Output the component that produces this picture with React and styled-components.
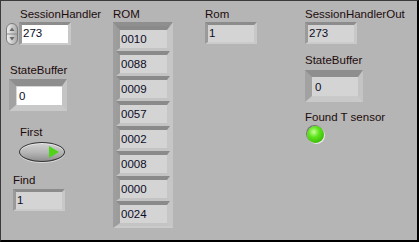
import React from "react";
import styled, { createGlobalStyle } from "styled-components";

const GlobalStyle = createGlobalStyle`
  html, body { margin: 0; padding: 0; background: #ffffff; }
  body { font-family: "Liberation Sans", Arial, sans-serif; }
`;

const Panel = styled.div`
  width: 419px;
  height: 242px;
  box-sizing: border-box;
  background: #b5b5b5;
  border-top: 1px solid #3a3a3a;
  border-left: 1px solid #3a3a3a;
  border-right: 2px solid #000;
  border-bottom: 2px solid #000;
  display: flex;
  align-items: flex-start;
`;

const Column = styled.div`
  display: flex;
  flex-direction: column;
  align-items: flex-start;
  flex: none;
  width: ${(p) => p.$width}px;
  padding-left: ${(p) => p.$pad || 0}px;
  box-sizing: border-box;
`;

const Label = styled.div`
  font-size: 11.5px;
  line-height: 14px;
  color: #1e0c0c;
  white-space: nowrap;
  margin-top: ${(p) => p.$top || 0}px;
  margin-left: ${(p) => p.$indent || 0}px;
`;

const Row = styled.div`
  display: flex;
  align-items: center;
  margin-top: ${(p) => p.$top || 0}px;
`;

const Field = styled.div`
  box-sizing: border-box;
  width: ${(p) => p.$w || 52}px;
  height: ${(p) => p.$h || 22}px;
  margin-top: ${(p) => p.$top || 0}px;
  margin-left: ${(p) => p.$indent || 0}px;
  border-style: solid;
  border-width: 3px 3px 2px 3px;
  border-color: #8c8c8c #c8c8c8 #cbcbcb #9a9a9a;
  background: ${(p) => (p.$control ? "#ffffff" : "#d4d4d4")};
  font-size: 11.5px;
  line-height: 16px;
  color: #0c0c26;
  padding-left: 1px;
`;

const Frame = styled.div`
  box-sizing: border-box;
  width: 58px;
  height: 32px;
  margin-top: ${(p) => p.$top || 0}px;
  margin-left: ${(p) => p.$indent || 0}px;
  border-style: solid;
  border-width: 7px 5px 6px 7px;
  border-color: #8e8e8e #c4c4c4 #c9c9c9 #a2a2a2;
  background: #d6d6d6;
  padding: 1px 0 0 1px;
`;

const FrameInner = styled.div`
  height: 100%;
  background: ${(p) => (p.$control ? "#ffffff" : "#d4d4d4")};
  font-size: 11.5px;
  line-height: 18px;
  color: #0c0c26;
  padding-left: 2px;
`;

const ArrayBox = styled.div`
  box-sizing: border-box;
  width: 60px;
  margin-top: 1px;
  border-style: solid;
  border-width: 4px 3px 2px 3px;
  border-color: #8f8f8f #c6c6c6 #cbcbcb #9e9e9e;
  background: #b8b8b8;
  display: flex;
  flex-direction: column;
`;

const Cell = styled.div`
  box-sizing: border-box;
  height: 25px;
  width: 54px;
  border-style: solid;
  border-width: 4px 3px 3px 4px;
  border-color: #8a8a8a #c6c6c6 #c4c4c4 #9c9c9c;
  background: #d4d4d4;
  font-size: 11.5px;
  line-height: 18px;
  color: #0c0c26;
  padding-left: 1px;
`;

const Button = styled.div`
  box-sizing: border-box;
  width: 46px;
  height: 20px;
  margin-top: ${(p) => p.$top || 0}px;
  margin-left: ${(p) => p.$indent || 0}px;
  border: 1px solid #353535;
  border-radius: 50%;
  background: linear-gradient(#d2d2d2, #b4b4b4 55%, #8e8e8e);
  box-shadow: inset 0 1px 0 #e8e8e8, 0 1px 0 #dcdcdc;
  display: flex;
  align-items: center;
  justify-content: flex-end;
  padding-right: 5px;
`;

const Led = styled.div`
  width: 17px;
  height: 17px;
  margin-top: ${(p) => p.$top || 0}px;
  margin-left: ${(p) => p.$indent || 0}px;
  border-radius: 50%;
  background: radial-gradient(circle at 40% 35%, #c9ff9c 0%, #5fe51c 35%, #2fae00 90%);
  box-shadow: -1px -1px 0 #7a7a7a, 1px 1px 0 #ececec;
`;

function Spinner() {
  return (
    <svg width="12" height="22" viewBox="0 0 12 22">
      <defs>
        <linearGradient id="sp" x1="0" x2="1">
          <stop offset="0" stopColor="#f2f2f2" />
          <stop offset="1" stopColor="#a8a8a8" />
        </linearGradient>
      </defs>
      <rect x="0.5" y="0.5" width="11" height="21" rx="5.5" fill="url(#sp)" stroke="#7c7c7c" />
      <line x1="1" y1="11" x2="11" y2="11" stroke="#8a8a8a" />
      <path d="M3.5 8 L6 4.5 L8.5 8 Z" fill="#6a6a6a" />
      <path d="M3.5 14 L6 17.5 L8.5 14 Z" fill="#6a6a6a" />
    </svg>
  );
}

function PlayArrow() {
  return (
    <svg width="10" height="12" viewBox="0 0 10 12">
      <path d="M0 0 L10 6 L0 12 Z" fill="#4fd41a" />
    </svg>
  );
}

const romValues = ["0010", "0088", "0009", "0057", "0002", "0008", "0000", "0024"];

export default function App() {
  return (
    <>
      <GlobalStyle />
      <Panel>
        <Column $width={112} $pad={5}>
          <Label $top={6} $indent={14}>SessionHandler</Label>
          <Row $top={1}>
            <Spinner />
            <Field $control $w={52} $h={23} $indent={1}>273</Field>
          </Row>
          <Label $top={18} $indent={4}>StateBuffer</Label>
          <Frame $control $top={2} $indent={3}>
            <FrameInner $control>0</FrameInner>
          </Frame>
          <Label $top={14} $indent={14}>First</Label>
          <Button $top={3} $indent={13}>
            <PlayArrow />
          </Button>
          <Label $top={11} $indent={7}>Find</Label>
          <Field $top={2} $indent={7}>1</Field>
        </Column>
        <Column $width={92}>
          <Label $top={6}>ROM</Label>
          <ArrayBox>
            {romValues.map((v) => (
              <Cell key={v}>{v}</Cell>
            ))}
          </ArrayBox>
        </Column>
        <Column $width={100}>
          <Label $top={6}>Rom</Label>
          <Field $top={1}>1</Field>
        </Column>
        <Column $width={110}>
          <Label $top={6}>SessionHandlerOut</Label>
          <Field $top={1}>273</Field>
          <Label $top={9}>StateBuffer</Label>
          <Frame $top={3}>
            <FrameInner>0</FrameInner>
          </Frame>
          <Label $top={8}>Found T sensor</Label>
          <Led $top={2} $indent={2} />
        </Column>
      </Panel>
    </>
  );
}
